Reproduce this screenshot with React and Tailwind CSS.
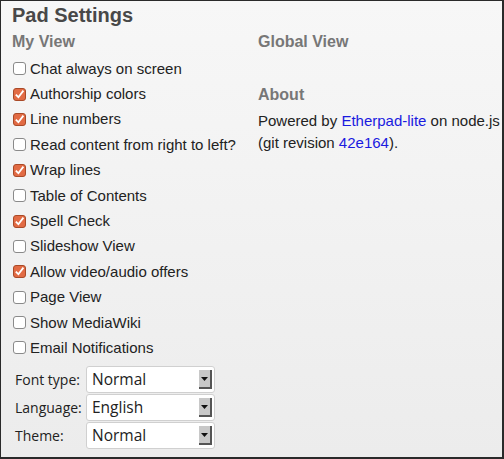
import React from "react";

const items = [
  ["Chat always on screen", false],
  ["Authorship colors", true],
  ["Line numbers", true],
  ["Read content from right to left?", false],
  ["Wrap lines", true],
  ["Table of Contents", false],
  ["Spell Check", true],
  ["Slideshow View", false],
  ["Allow video/audio offers", true],
  ["Page View", false],
  ["Show MediaWiki", false],
  ["Email Notifications", false],
];

function Box({ checked }) {
  if (checked) {
    return (
      <span className="flex h-[13px] w-[13px] shrink-0 items-center justify-center rounded-[3px] border border-[#a94a28] bg-[#e26b44]">
        <svg width="11" height="11" viewBox="0 0 11 11">
          <path d="M1.8 5.6 L4.4 8.2 L9.4 1.6" fill="none" stroke="#fff" strokeWidth="1.8" />
        </svg>
      </span>
    );
  }
  return <span className="h-[13px] w-[13px] shrink-0 rounded-[3px] border border-[#8a8a8a] bg-white" />;
}

function Select({ label, value }) {
  return (
    <div className="flex h-[28px] items-center">
      <span className="w-[74px] pl-[3px] text-[14px] text-[#222]">{label}</span>
      <div className="flex h-[27px] w-[129px] items-center rounded-[3px] border border-[#d0d0d0] bg-white pl-[5px] pr-[2px]">
        <span className="flex-1 text-[15.5px] text-[#222]">{value}</span>
        <span className="flex h-[19px] w-[13px] items-center justify-center border-b-2 border-r-2 border-[#555] bg-[#c8c8c8]">
          <svg width="7" height="4" viewBox="0 0 7 4"><path d="M0 0 H7 L3.5 4 Z" fill="#111" /></svg>
        </span>
      </div>
    </div>
  );
}

export default function App() {
  return (
    <div
      className="h-[459px] w-[504px] border-b-2 border-l border-r-2 border-t border-[#2a2a2a] bg-gradient-to-b from-[#f7f7f7] to-[#ececec] text-[#222]"
      style={{ fontFamily: '"Liberation Sans", Arial, sans-serif' }}
    >
      <div className="pl-[11px] pt-[2px]">
        <h1 className="h-[24px] text-[20px] font-bold leading-[24px] text-[#484848]">Pad Settings</h1>
        <div className="grid grid-cols-[246px_1fr]">
          <div>
            <h2 className="h-[29px] text-[16px] font-bold leading-[30px] text-[#777]">My View</h2>
            <div className="flex flex-col">
              {items.map(([t, c]) => (
                <div key={t} className="flex h-[25.4px] items-center gap-[4px] pl-[1px]">
                  <Box checked={c} />
                  <span className="text-[15px] leading-[18px]">{t}</span>
                </div>
              ))}
            </div>
            <div className="mt-[5px] flex flex-col" style={{ fontFamily: '"Open Sans", "Noto Sans", sans-serif' }}>
              <Select label="Font type:" value="Normal" />
              <Select label="Language:" value="English" />
              <Select label="Theme:" value="Normal" />
            </div>
          </div>
          <div>
            <h2 className="h-[30px] text-[16px] font-bold leading-[30px] text-[#777]">Global View</h2>
            <h2 className="mt-[23px] h-[30px] text-[16px] font-bold leading-[30px] text-[#777]">About</h2>
            <p className="text-[15px] leading-[22px]">
              Powered by <a className="text-[#1a1ae0]">Etherpad-lite</a> on node.js
              <br />
              (git revision <a className="text-[#1a1ae0]">42e164</a>).
            </p>
          </div>
        </div>
      </div>
    </div>
  );
}
